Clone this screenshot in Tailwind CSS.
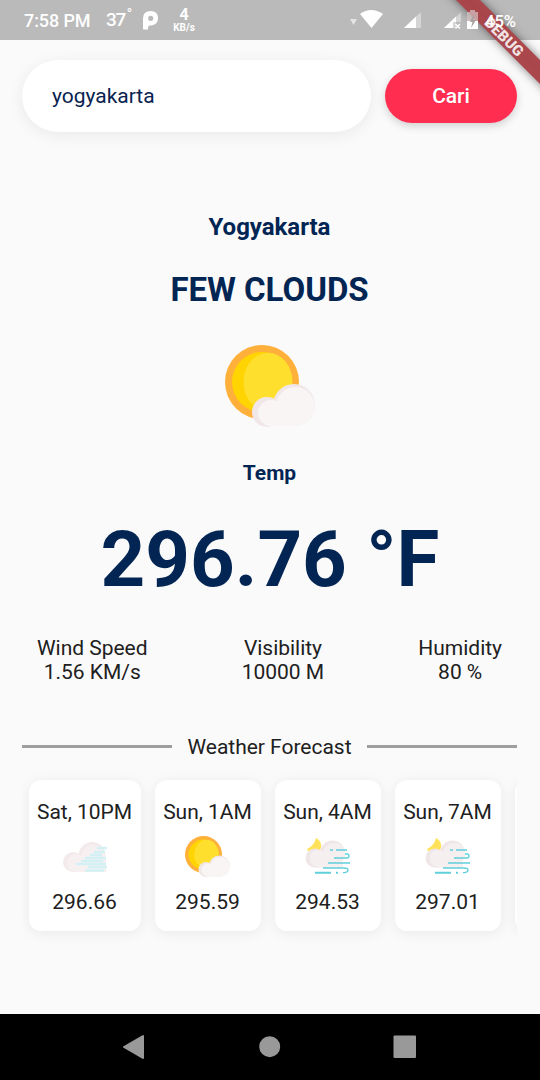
<!DOCTYPE html>
<html lang="en">
<head>
<meta charset="utf-8">
<title>Weather</title>
<script src="https://cdn.jsdelivr.net/npm/@tailwindcss/browser@4"></script>
</head>
<body class="bg-[#fafafa]">
<svg class="hidden">
  <symbol id="sun" viewBox="0 0 90 82">
    <circle cx="37" cy="37" r="37" fill="#ffb03b"/>
    <circle cx="37" cy="37" r="30" fill="#ffd400"/>
    <ellipse cx="43" cy="37" rx="24.500" ry="29.300" fill="#ffdf2e"/>
    <g fill="#f1e7e8"><circle cx="42" cy="67" r="15"/><circle cx="69" cy="60" r="21"/><path d="M40 66H72V81H40Z"/></g>
    <g fill="#f9f5f4"><circle cx="46" cy="68" r="13"/><circle cx="70.500" cy="61.500" r="19.500"/><path d="M44 62H72V81H44Z"/></g>
  </symbol>
  <symbol id="fog" viewBox="0 0 45 30">
    <g fill="#f3ebeb"><circle cx="10" cy="20" r="10"/><circle cx="29" cy="13.500" r="13.500"/><path d="M9 16H43V30H9Z"/></g>
    <g fill="#f7f0f0"><circle cx="13" cy="21" r="9"/><circle cx="30" cy="15" r="12"/><path d="M12 18H43V30H12Z"/></g>
    <path d="M34 6H44M31 10H42M27 13H39M22 16H43M18 19H40M13 22H43M25 25H44M22 28.500H41" stroke="#d3f1f5" stroke-width="2.600" fill="none"/>
  </symbol>
  <symbol id="windy" viewBox="0 0 46 36">
    <path d="M2 11Q9 8 11 0Q15 2 16 6Q17 9 14 14L3 15Q4 13 2 11Z" fill="#ffe25a"/>
    <g fill="#efe6e7"><circle cx="10" cy="20" r="9.500"/><circle cx="27.500" cy="15" r="12.500"/><path d="M10 15H38V29.500H10Z"/></g>
    <g fill="#f5efef"><circle cx="13" cy="20.500" r="8.500"/><circle cx="29" cy="16" r="11"/><path d="M13 16H38V29.500H13Z"/></g>
    <g fill="none" stroke="#5fcfdc" stroke-width="1.300">
      <path d="M25 12H28M31 12H42M29 20H42A2 2 0 0 0 42 16H40M23 25H45M18 30H39Q43 30 43 32T40 34.700H38"/>
      <path d="M10 34.700H26M31 34.700H33" stroke-width="2"/>
    </g>
  </symbol>
</svg>
<main class="relative flex h-[1080px] w-[540px] flex-col overflow-hidden bg-[#fafafa] font-['Roboto',sans-serif] text-[21px] leading-6 tracking-[-0.02px] text-[#202020]">
  <header class="flex h-10 shrink-0 items-center bg-[#bababa] pl-6 tracking-normal text-white">
    <span class="w-[82px] whitespace-nowrap pt-0.5 text-[18px] font-medium tracking-[-0.1px]">7:58 PM</span>
    <span class="flex w-[37px] text-[19px] font-medium tracking-[-1.4px]"><span>37</span><span class="-mt-1.5 ml-0.5 text-[14px]">°</span></span>
    <svg class="h-[19px] w-[15px]" viewBox="0 0 15 19"><path fill="#fff" fill-rule="evenodd" d="M0 7.500Q0 0 7.500 0Q15 0 15 7T8 14.500H6.500Q5 14.500 5 18.500H0ZM7.700 4.700A2.600 2.600 0 1 0 7.700 9.900A2.600 2.600 0 1 0 7.700 4.700Z"/></svg>
    <span class="ml-3.5 flex w-[24px] flex-col items-center font-medium"><span class="h-[14px] text-[16px] font-bold leading-[14px]">4</span><span class="h-[11px] whitespace-nowrap pt-px text-[10px] font-bold leading-[10px]">KB/s</span></span>
    <svg class="ml-auto mr-px h-10 w-[190px] shrink-0" viewBox="349 0 190 40">
      <path d="M350 19H357L353.500 25Z" fill="#e4e4e4"/>
      <path d="M360 14Q371 6 383 14L371.500 28Z" fill="#fff"/>
      <path d="M404 28L421 12V28Z" fill="#d5d5d5"/><path d="M404 28L416 16.500V28Z" fill="#fff"/>
      <path d="M444 28L461 12V22H456V28Z" fill="#d5d5d5"/><path d="M444 28L456 16.500V22H453V28Z" fill="#fff"/><path d="M455.500 24L460 28.500M460 24L455.500 28.500" stroke="#fff" stroke-width="1.500"/>
    </svg>
  </header>
  <form class="flex shrink-0 items-center pl-[22px] pt-5">
    <div class="flex h-[72px] w-[349px] items-center rounded-full bg-white pl-[30px] text-[#08234f] shadow-[0_3px_16px_rgba(0,0,0,0.07)]">yogyakarta</div>
    <button type="button" class="ml-3.5 h-[54px] w-[132px] rounded-full bg-[#ff2e50] font-medium text-white shadow-[0_3px_8px_rgba(0,0,0,0.17)]">Cari</button>
  </form>
  <section class="flex shrink-0 flex-col items-center pr-px pt-[81px] font-bold text-[#022553]">
    <h1 class="h-7 text-[24px] leading-7">Yogyakarta</h1>
    <h2 class="mt-[29px] h-10 text-[33px] leading-10">FEW CLOUDS</h2>
    <svg class="ml-px mt-[35px] h-[82px] w-[90px]"><use href="#sun"/></svg>
    <p class="mt-[34px]">Temp</p>
    <p class="mt-[27px] h-[96px] pl-px text-[78px] leading-[96px]">296.76 °F</p>
  </section>
  <section class="mt-[28px] flex shrink-0 justify-between px-[37px] pr-[38px] text-center">
    <p>Wind Speed<br>1.56 KM/s</p>
    <p>Visibility<br>10000 M</p>
    <p>Humidity<br>80 %</p>
  </section>
  <div class="mt-[51px] flex shrink-0 items-center justify-between pl-[22px] pr-[23px]">
    <span class="mb-px h-[3px] w-[150px] bg-[#9e9e9e]"></span><span>Weather Forecast</span><span class="mb-px h-[3px] w-[150px] bg-[#9e9e9e]"></span>
  </div>
  <section class="ml-[22px] mt-2 flex h-[190px] w-[495px] shrink-0 gap-3.5 overflow-hidden px-[7px] pt-[13px]">
    <article class="flex h-[151px] w-[112px] shrink-0 flex-col items-center rounded-xl bg-white pt-5 pr-px shadow-[0_2px_14px_rgba(0,0,0,0.07)]"><p>Sat, 10PM</p><div class="flex h-[66px] items-center"><svg class="ml-px h-[30px] w-[45px]"><use href="#fog"/></svg></div><p>296.66</p></article>
    <article class="flex h-[151px] w-[106px] shrink-0 flex-col items-center rounded-xl bg-white pt-5 pr-px shadow-[0_2px_14px_rgba(0,0,0,0.07)]"><p>Sun, 1AM</p><div class="flex h-[66px] items-center pb-0.5"><svg class="h-[41px] w-[45px]"><use href="#sun"/></svg></div><p>295.59</p></article>
    <article class="flex h-[151px] w-[106px] shrink-0 flex-col items-center rounded-xl bg-white pt-5 pr-px shadow-[0_2px_14px_rgba(0,0,0,0.07)]"><p>Sun, 4AM</p><div class="flex h-[66px] items-center pb-0.5"><svg class="ml-px h-[36px] w-[46px]"><use href="#windy"/></svg></div><p>294.53</p></article>
    <article class="flex h-[151px] w-[106px] shrink-0 flex-col items-center rounded-xl bg-white pt-5 pr-px shadow-[0_2px_14px_rgba(0,0,0,0.07)]"><p>Sun, 7AM</p><div class="flex h-[66px] items-center pb-0.5"><svg class="ml-px h-[36px] w-[46px]"><use href="#windy"/></svg></div><p>297.01</p></article>
    <article class="h-[151px] w-[106px] shrink-0 rounded-xl bg-white shadow-[0_2px_14px_rgba(0,0,0,0.07)]"></article>
  </section>
  <nav class="mt-auto h-[66px] shrink-0 bg-black">
    <svg class="h-[66px] w-[540px]" viewBox="0 1014 540 66" fill="#999" stroke="#999" stroke-width="2" stroke-linejoin="round"><path d="M124 1047L143 1036V1058Z"/><circle cx="269.700" cy="1046.700" r="9.500"/><rect x="394.500" y="1036.500" width="20.500" height="20.500"/></svg>
  </nav>
  <svg class="absolute right-0 top-0 h-[100px] w-[100px]" viewBox="440 0 100 100">
    <path d="M446 -10H470L560 80V104Z" fill="#a9444a" fill-opacity=".97" class="drop-shadow-[0_0_5px_rgba(0,0,0,0.5)]"/>
    <path d="M467 12H470V10H475V12H478V22H467Z" fill="#d9c5c6" fill-opacity=".7"/><path d="M467 21H478V29H467Z" fill="#fff"/><path d="M474 14L470 22H472.500L471 28L476 20H473.500Z" fill="#a9a0a0"/>
    <text transform="translate(504 37) rotate(45)" text-anchor="middle" y="5" font-family="Roboto" font-size="15" font-weight="900" fill="#fff" fill-opacity=".85" textLength="48">DEBUG</text>
    <text x="485" y="26.500" fill="#fff" font-size="17" font-weight="500" textLength="31" lengthAdjust="spacingAndGlyphs">45%</text>
  </svg>
</main>
</body>
</html>
